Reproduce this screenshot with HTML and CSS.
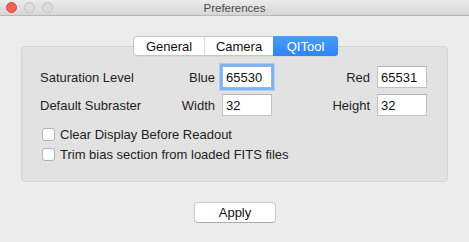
FILE: index.html
```html
<!DOCTYPE html>
<html lang="en">
<head>
    <meta charset="UTF-8">
    <link rel="stylesheet" href="styles.css">
</head>
<body>
    <div class="window">
        <div class="titlebar">
            <div class="lights">
                <span class="light red"></span>
                <span class="light"></span>
                <span class="light"></span>
            </div>
            <div class="title">Preferences</div>
        </div>
        <div class="content">
            <div class="tabs">
                <span class="tab tab-general">General</span>
                <span class="tab tab-camera">Camera</span>
                <span class="tab tab-qitool active">QITool</span>
            </div>
            <div class="box">
                <div class="row">
                    <span class="lbl">Saturation Level</span>
                    <span class="sub">Blue</span>
                    <input class="field focus" type="text" value="65530">
                    <span class="sub2">Red</span>
                    <input class="field" type="text" value="65531">
                </div>
                <div class="row">
                    <span class="lbl">Default Subraster</span>
                    <span class="sub">Width</span>
                    <input class="field" type="text" value="32">
                    <span class="sub2">Height</span>
                    <input class="field" type="text" value="32">
                </div>
                <div class="checks">
                    <label class="check"><span class="cb"></span>Clear Display Before Readout</label>
                    <label class="check"><span class="cb"></span>Trim bias section from loaded FITS files</label>
                </div>
            </div>
            <div class="actions">
                <button class="btn">Apply</button>
            </div>
        </div>
    </div>
</body>
</html>
```

FILE: styles.css
```css
*{box-sizing: border-box}
html,body{margin: 0;padding: 0}
body{width: 469px;height: 242px;overflow: hidden;background: #ececec;font-family: "Liberation Sans", Arial, sans-serif;font-size: 13px;color: #1e1e1e}
.window{height: 242px;display: flex;flex-direction: column}

.titlebar{height: 16px;display: flex;align-items: center;background: linear-gradient(#ebebeb, #d6d6d6);border-bottom: 1px solid #b8b8b8;position: relative}
.lights{display: flex;gap: 7px;padding-left: 6px}
.light{width: 11px;height: 11px;border-radius: 50%;background: #dcdcdc;border: 1px solid #c3c3c3}
.light.red{background: #fc5f57;border-color: #e0443e}
.title{flex: 1;text-align: center;font-size: 11.5px;color: #4a4a4a;margin-left: -53px;padding-top: 1px}

.content{padding: 20px 21px 0 21px;display: flex;flex-direction: column}
.tabs{display: flex;align-self: flex-start;margin-left: 112px;margin-bottom: -10px;position: relative;z-index: 1;height: 20px;background: #fff;border: 1px solid #c6c6c6;border-radius: 4px;box-shadow: 0 1px 0 rgba(0,0,0,0.04)}
.tab{display: flex;align-items: center;justify-content: center;height: 18px;font-size: 13px;color: #111}
.tab-general{width: 71px;border-right: 1px solid #dadada}
.tab-camera{width: 68px}
.tab-qitool{width: 64px}
.tab.active{background: linear-gradient(#4a9cfb, #2f84f4);color: #fff;border-radius: 0 3px 3px 0;margin: -1px -1px -1px 0;height: 20px;width: 65px}

.box{height: 136px;background: #e2e2e2;border: 1px solid #d6d6d6;border-radius: 4px;padding: 19px 0 0 18px}
.row{display: flex;align-items: center;height: 22px;margin-bottom: 6px}
.lbl{width: 120px}
.sub{width: 55px;text-align: right;margin-right: 7px}
.sub2{width: 98px;text-align: right;margin-right: 7px}
.field{width: 50px;height: 22px;border: 1px solid #c2c2c2;border-top-color: #b3b3b3;background: #fff;font-family: "Liberation Sans", Arial, sans-serif;font-size: 13px;color: #111;padding: 1px 0 0 3px;outline: none;border-radius: 0}
.field.focus{box-shadow: 0 0 0 2px #7fb1f5, 0 0 0 3px rgba(127,177,245,0.4);border-color: #8fb8ee}

.checks{display: flex;flex-direction: column;gap: 6px;padding-top: 5px}
.check{display: flex;align-items: center;height: 14px;font-size: 13px}
.cb{width: 13px;height: 13px;background: #fff;border: 1px solid #b3b3b3;border-radius: 3px;margin: 0 5px 0 2px}

.actions{display: flex;justify-content: center;padding-top: 20px}
.btn{width: 82px;height: 21px;background: #fff;border: 1px solid #c8c8c8;border-bottom-color: #adadad;border-radius: 4px;font-family: "Liberation Sans", Arial, sans-serif;font-size: 13px;color: #111;padding: 0;margin-left: 1px}
```
